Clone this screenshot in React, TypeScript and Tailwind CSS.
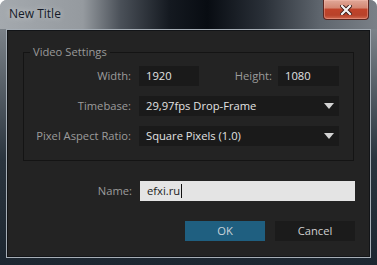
import React from "react";

const font = { fontFamily: '"Open Sans", "Noto Sans", sans-serif' };

function Arrow() {
  return (
    <svg width="10" height="6" viewBox="0 0 10 6" className="block">
      <path d="M0 0 L10 0 L5 6 Z" fill="#d4d4d4" />
    </svg>
  );
}

function Field({ children, w }: { children: React.ReactNode; w: string }) {
  return (
    <div className={`${w} h-[20px] bg-[#1a1a1a] flex items-center pl-[7px] text-[#e2e2e2]`}>{children}</div>
  );
}

function Select({ value }: { value: string }) {
  return (
    <div className="w-[200px] h-[20px] bg-[#1a1a1a] flex items-center justify-between pl-[7px] pr-[5px] text-[#e2e2e2]">
      <span>{value}</span>
      <Arrow />
    </div>
  );
}

export default function App() {
  return (
    <div
      className="relative w-[377px] h-[265px] overflow-hidden rounded-t-[7px] text-[11.2px] leading-none"
      style={font}
    >
      <div className="absolute inset-0 bg-[linear-gradient(to_bottom,#8e949a_0%,#5b636b_30%,#2a343e_60%,#1c2630_100%)]" />
      <div className="relative flex flex-col h-full">
        {/* Title bar */}
        <div className="h-[29px] bg-[linear-gradient(to_right,#a4a9ae_0%,#959a9f_22%,#4a5058_32%,#141920_45%,#080c12_55%,#2a3038_70%,#5f666e_85%,#7a8087_100%)] flex items-start pl-[9px] pt-[8px]">
          <span
            className="text-[#141a28] text-[12px] leading-none"
            style={{ textShadow: "0 0 6px rgba(255,255,255,0.55)" }}
          >
            New Title
          </span>
        </div>
        {/* Close button */}
        <div className="absolute left-[323px] top-0 w-[46px] h-[20px] rounded-b-[4px] border border-t-0 border-[#5a2620] bg-[linear-gradient(to_bottom,#e0a898_0%,#d48874_40%,#c0432a_50%,#b8422a_80%,#cf6a50_100%)] flex items-center justify-center shadow-[inset_0_0_0_1px_rgba(255,200,190,0.35)]">
          <svg width="12" height="10" viewBox="0 0 12 10">
            <path d="M2 1 L10 9 M10 1 L2 9" stroke="#3a1a16" strokeWidth="4" strokeLinecap="square" />
            <path d="M2 1 L10 9 M10 1 L2 9" stroke="#f4f4f4" strokeWidth="2.2" strokeLinecap="square" />
          </svg>
        </div>
        {/* Client */}
        <div className="mx-[6px] h-[229px] border border-[#a6aeb6]">
          <div className="h-full border border-[#121417] bg-[#232323] flex flex-col pt-[21px] pl-[15px] pr-[14px]">
            {/* Group */}
            <div className="relative w-[331px] h-[109px] border border-[#141414] pt-[13px]">
              <div className="absolute left-[6px] top-[-8px] bg-[#232323] px-[3px] text-[#9a9a9a] leading-[14px]">
                Video Settings
              </div>
              <div className="grid grid-cols-[107px_200px] gap-x-[8px] gap-y-[10px] items-center">
                <div className="text-right text-[#9c9c9c]">Width:</div>
                <div className="flex items-center">
                  <Field w="w-[60px]">1920</Field>
                  <div className="flex-1 text-right pr-[6px] text-[#9c9c9c]">Height:</div>
                  <Field w="w-[61px]">1080</Field>
                </div>
                <div className="text-right text-[#9c9c9c]">Timebase:</div>
                <Select value="29,97fps Drop-Frame" />
                <div className="text-right text-[#9c9c9c]">Pixel Aspect Ratio:</div>
                <Select value="Square Pixels (1.0)" />
              </div>
            </div>
            {/* Name */}
            <div className="flex items-center mt-[20px] pl-[1px]">
              <div className="w-[108px] text-right text-[#9c9c9c]">Name:</div>
              <div className="ml-[8px] w-[215px] h-[20px] bg-[#e4e4e4] flex items-center pl-[7px] text-[#1a1a1a]">
                <span>efxi.ru</span>
                <span className="w-px h-[14px] bg-[#111] ml-[1px]" />
              </div>
            </div>
            {/* Buttons */}
            <div className="flex justify-end gap-[10px] mt-[20px]">
              <div className="w-[80px] h-[20px] bg-[#1f5f80] flex items-center justify-center text-[#c9d3da]">OK</div>
              <div className="w-[80px] h-[20px] bg-[#1b1b1b] flex items-center justify-center text-[#d0d0d0]">Cancel</div>
            </div>
          </div>
        </div>
      </div>
    </div>
  );
}
